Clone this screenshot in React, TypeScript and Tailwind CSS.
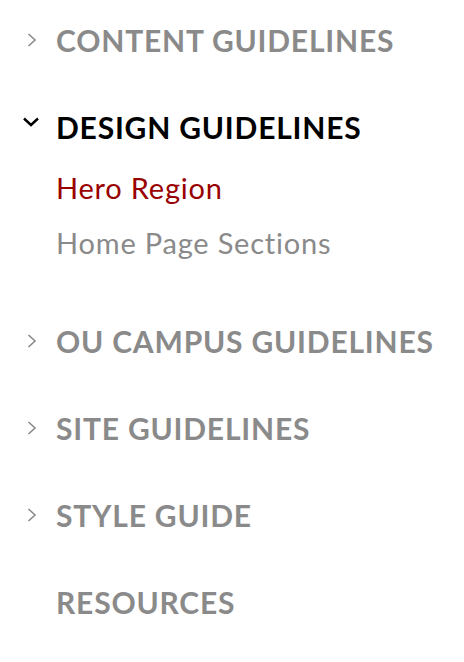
import type { ReactNode } from 'react';

type Section = {
  label: string;
  state: 'closed' | 'open' | 'none';
  children?: { label: string; active?: boolean }[];
};

const sections: Section[] = [
  { label: 'CONTENT GUIDELINES', state: 'closed' },
  {
    label: 'DESIGN GUIDELINES',
    state: 'open',
    children: [
      { label: 'Hero Region', active: true },
      { label: 'Home Page Sections' }
    ]
  },
  { label: 'OU CAMPUS GUIDELINES', state: 'closed' },
  { label: 'SITE GUIDELINES', state: 'closed' },
  { label: 'STYLE GUIDE', state: 'closed' },
  { label: 'RESOURCES', state: 'none' }
];

function ChevronRight() {
  return (
    <svg width="12" height="16" viewBox="0 0 12 16" fill="none" className="text-[#8a8a8a]">
      <path d="M2.5 2 L9 8 L2.5 14" stroke="currentColor" strokeWidth="1.6" />
    </svg>
  );
}

function ChevronDown() {
  return (
    <svg width="18" height="12" viewBox="0 0 18 12" fill="none" className="text-black">
      <path d="M2 2.5 L9 9 L16 2.5" stroke="currentColor" strokeWidth="2.4" />
    </svg>
  );
}

function Header({ section }: { section: Section }) {
  let icon: ReactNode = null;
  if (section.state === 'closed') icon = <ChevronRight />;
  if (section.state === 'open') icon = <ChevronDown />;

  return (
    <div className="flex h-10 items-center">
      <div className="flex w-[56px] items-center justify-center pl-[7px]">
        {section.state === 'open' ? <div className="-mt-[10px] -ml-[2px]">{icon}</div> : icon}
      </div>
      <span
        className={
          'text-[30px] font-bold tracking-[0.8px] ' +
          (section.state === 'open' ? 'text-black' : 'text-[#8a8a8a]')
        }
      >
        {section.label}
      </span>
    </div>
  );
}

export default function App() {
  return (
    <nav className="min-h-[662px] bg-white pt-5 font-['Lato',sans-serif]">
      <ul className="flex flex-col">
        {sections.map((section) => (
          <li key={section.label} className={section.children ? 'mb-[60px]' : 'mb-[47px]'}>
            <Header section={section} />
            {section.children && (
              <ul className="mt-[23px] flex flex-col gap-[19px] pl-[56px]">
                {section.children.map((child) => (
                  <li
                    key={child.label}
                    className={
                      'h-9 leading-9 text-[29px] tracking-[0.8px] ' +
                      (child.active ? 'text-[#990000]' : 'text-[#8a8a8a]')
                    }
                  >
                    {child.label}
                  </li>
                ))}
              </ul>
            )}
          </li>
        ))}
      </ul>
    </nav>
  );
}
